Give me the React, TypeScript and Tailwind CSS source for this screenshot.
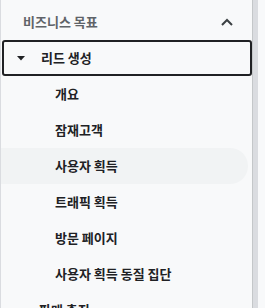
import React from "react";

const font = { fontFamily: '"Noto Sans CJK KR", "Noto Sans", sans-serif' };

export default function App() {
  const children = ["개요", "잠재고객", "사용자 획득", "트래픽 획득", "방문 페이지", "사용자 획득 동질 집단"];
  return (
    <div className="w-[265px] h-[308px] overflow-hidden bg-[#f8f9fa] flex" style={font}>
      <div className="w-[252px] h-full border-l border-[#dadce0] pt-1 flex flex-col shrink-0">
        <div className="h-9 flex items-center pl-[22px] pr-[19px] shrink-0">
          <span className="text-[13px] font-semibold text-[#5f6368] flex-1">비즈니스 목표</span>
          <svg width="12" height="8" viewBox="0 0 12 8" className="text-[#3c4043]">
            <path d="M1 7 L6 2 L11 7" fill="none" stroke="currentColor" strokeWidth="2" />
          </svg>
        </div>
        <div className="h-9 ml-px flex items-center border-2 border-[#202124] rounded-[3px] shrink-0">
          <svg width="8" height="5" viewBox="0 0 8 5" className="ml-[13px] mr-[16px]">
            <path d="M0 0 L8 0 L4 4.5 Z" fill="#202124" />
          </svg>
          <span className="text-[13px] font-bold text-[#202124]">리드 생성</span>
        </div>
        {children.map((c) => (
          <div
            key={c}
            className={`h-9 flex items-center pl-[54px] shrink-0 mr-[4px] ${c === "사용자 획득" ? "bg-[#f1f3f4] rounded-r-full" : ""}`}
          >
            <span className="text-[13px] font-semibold text-[#202124]">{c}</span>
          </div>
        ))}
        <div className="h-9 flex items-center pl-[38px] shrink-0">
          <span className="text-[13px] font-semibold text-[#202124]">판매 촉진</span>
        </div>
      </div>
      <div className="w-[6px] h-full bg-[#dadce0] border-l border-[#c4c7c9] shrink-0" />
    </div>
  );
}
